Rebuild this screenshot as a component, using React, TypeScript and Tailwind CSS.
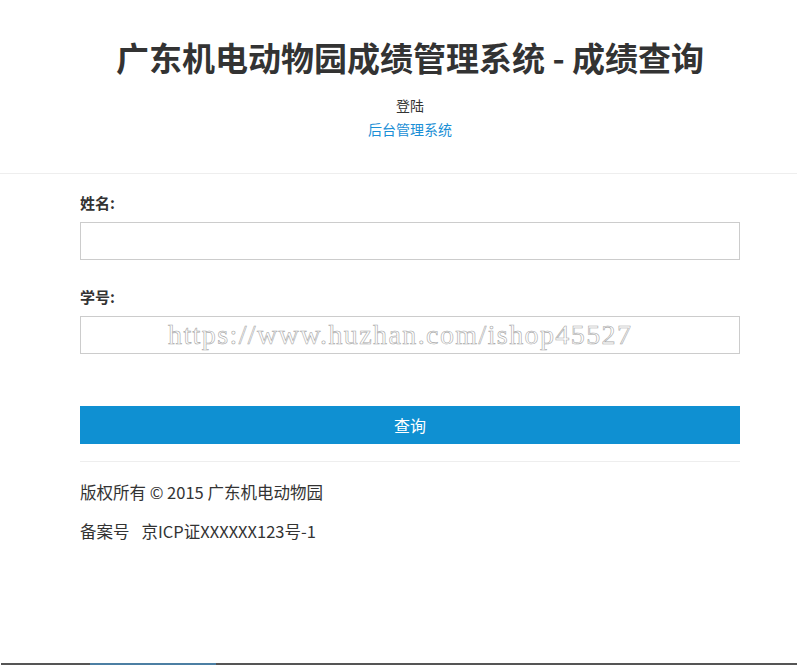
const font = { fontFamily: '"Noto Sans CJK SC", "Noto Sans", sans-serif' };

const Field = ({ label, children, top }: { label: string; children?: React.ReactNode; top: string }) => (
  <div className={top}>
    <label className="block text-[15px] leading-5 font-bold text-[#333]">{label}</label>
    <div className="relative mt-[9px] h-[38px] border border-[#ccc] bg-white">
      <input className="w-full h-full px-3 outline-none text-[15px] text-[#333] bg-transparent" />
      {children}
    </div>
  </div>
);

const App = () => {
  return (
    <div className="min-h-screen flex flex-col bg-white" style={font}>
      {/* Page header */}
      <header className="pt-[37px] pl-[80px] pr-[60px] text-center">
        <h1 className="text-[33px] leading-10 font-bold text-[#333]">广东机电动物园成绩管理系统 - 成绩查询</h1>
        <div className="mt-[18px] text-[14px] leading-5 text-[#333]">登陆</div>
        <a href="#" className="block mt-1 text-[14px] leading-5 text-[#1b8fd6]">后台管理系统</a>
      </header>

      <div className="mt-[34px] mr-[3px] h-px bg-[#eeeeee]" />

      {/* Query form */}
      <main className="ml-[80px] w-[660px] pt-[19px]">
        <Field label="姓名:" top="" />
        <Field label="学号:" top="mt-[27px]">
          <span
            className="pointer-events-none absolute inset-y-0 left-[87px] flex items-center text-[28px] tracking-[1.4px] text-white"
            style={{ fontFamily: '"Liberation Serif", serif', WebkitTextStroke: '0.6px #a8a8a8' }}
          >
            https://www.huzhan.com/ishop45527
          </span>
        </Field>

        <button className="mt-[52px] w-full h-[38px] bg-[#0f90d2] text-white text-[16px]">查询</button>

        <div className="mt-[17px] h-px bg-[#eeeeee]" />

        <footer className="text-[16.5px] leading-5 text-[#333]">
          <p className="mt-5">版权所有 © 2015 广东机电动物园</p>
          <p className="mt-[19px]">
            备案号<span className="inline-block w-[12px]" />京ICP证XXXXXX123号-1
          </p>
        </footer>
      </main>

      {/* Bottom strip */}
      <div className="mt-auto mb-[2px] ml-px mr-[3px] h-[2px] flex">
        <div className="w-[89px] bg-[#555]" />
        <div className="w-[126px] bg-[#4c7fa3]" />
        <div className="flex-1 bg-[#555]" />
      </div>
    </div>
  );
};

export default App;
